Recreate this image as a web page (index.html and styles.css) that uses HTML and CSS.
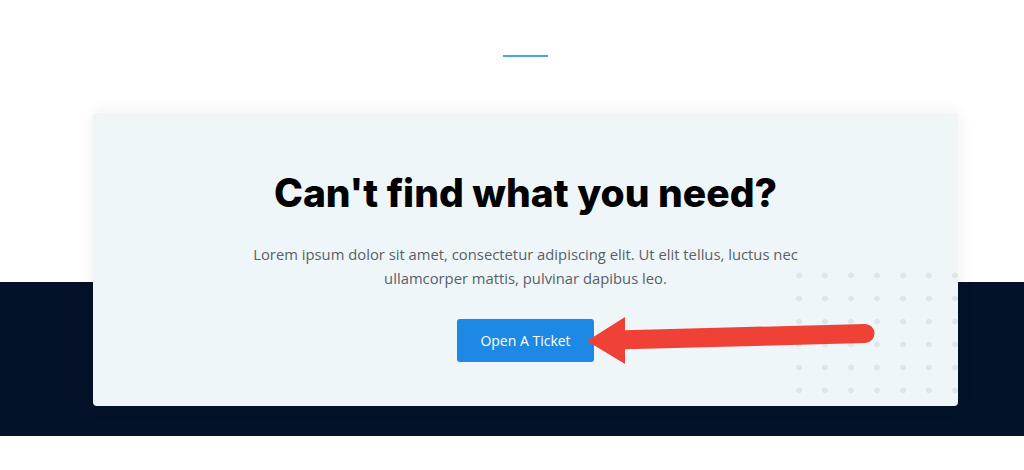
FILE: index.html
```html
<!DOCTYPE html>
<html lang="en">
<head>
  <meta charset="UTF-8">
  <meta name="viewport" content="width=device-width, initial-scale=1.0">
  <title>Support</title>
  <link rel="stylesheet" href="styles.css">
</head>
<body>
  <div class="intro">
    <div class="divider"></div>
  </div>

  <div class="cta">
    <div class="card">
      <div class="dots"></div>
      <h2 class="title">Can't find what you need?</h2>
      <p class="text">Lorem ipsum dolor sit amet, consectetur adipiscing elit. Ut elit tellus, luctus nec ullamcorper mattis, pulvinar dapibus leo.</p>
      <a class="button" href="#">Open A Ticket</a>
      <svg class="arrow" width="300" height="60" viewBox="0 0 300 60">
        <line x1="32" y1="27" x2="282" y2="20.5" stroke="#ef4136" stroke-width="19" stroke-linecap="round"/>
        <polygon points="4,28 42,4 42,51" fill="#ef4136"/>
      </svg>
    </div>
  </div>
</body>
</html>
```

FILE: styles.css
```css
body {
  margin: 0;
  background: #fff;
  font-family: "Open Sans", Arial, sans-serif;
}
.intro {
  width: 865px;
  padding: 55px 0 56px 93px;
}
.divider {
  width: 45px;
  height: 2px;
  margin: 0 auto;
  background: #4aa3f0;
}
.cta {
  padding: 0 0 30px 93px;
  background: linear-gradient(to bottom, #fff 169px, #041229 169px);
}
.card {
  position: relative;
  width: 865px;
  height: 293px;
  box-sizing: border-box;
  padding-top: 56px;
  background: #eef6f9;
  border-radius: 4px;
  box-shadow: 0 0 18px rgba(0, 0, 0, 0.07);
  text-align: center;
}
.dots {
  position: absolute;
  left: 693px;
  top: 151px;
  width: 172px;
  height: 138px;
  background: radial-gradient(circle, #dfe6ea 2.6px, transparent 3.2px);
  background-size: 26px 23px;
}
.title {
  position: relative;
  margin: 0;
  font-family: Inter, sans-serif;
  font-weight: 800;
  font-size: 39px;
  line-height: 48px;
  color: #000;
}
.text {
  position: relative;
  width: 560px;
  margin: 25px auto 0;
  font-size: 14.8px;
  line-height: 24px;
  color: #5a5f66;
}
.button {
  position: relative;
  display: inline-block;
  margin-top: 29px;
  width: 137px;
  height: 43px;
  line-height: 43px;
  background: #1e88e5;
  border-radius: 3px;
  color: #fff;
  font-size: 14px;
  font-weight: 500;
  text-decoration: none;
}
.arrow {
  position: absolute;
  left: 490px;
  top: 200px;
}
```
